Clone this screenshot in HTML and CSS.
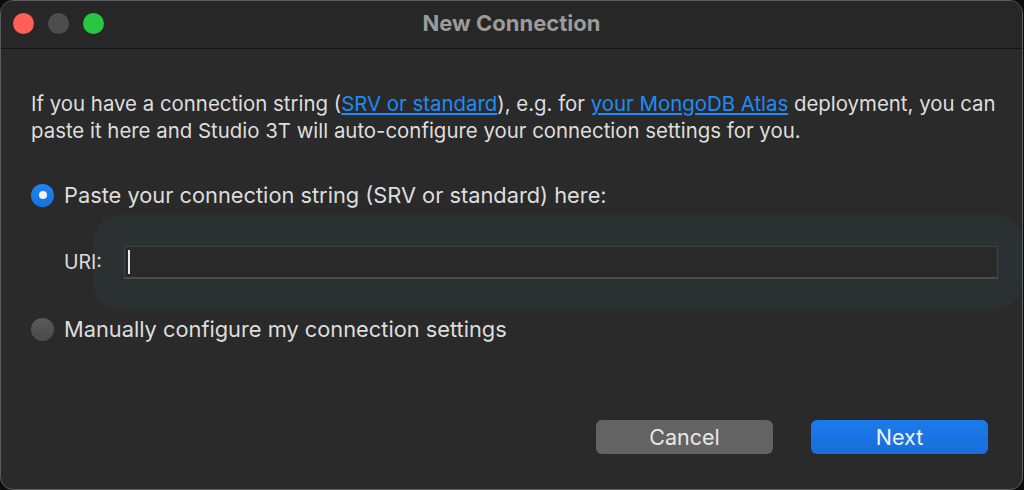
FILE: index.html
```html
<!DOCTYPE html>
<html>
<head>
<meta charset="utf-8">
<link rel="stylesheet" href="styles.css">
</head>
<body>
<div class="window">
  <div class="titlebar">
    <div class="lights">
      <span class="light red"></span>
      <span class="light gray"></span>
      <span class="light green"></span>
    </div>
    <div class="title">New Connection</div>
  </div>
  <div class="content">
    <p class="intro">If you have a connection string (<a class="link">SRV or standard</a>), e.g. for <a class="link">your MongoDB Atlas</a> deployment, you can paste it here and Studio 3T will auto-configure your connection settings for you.</p>
    <div class="option first">
      <span class="radio checked"></span>
      <span class="label">Paste your connection string (SRV or standard) here:</span>
    </div>
    <div class="uri-row">
      <div class="glow"></div>
      <span class="uri-label">URI:</span>
      <div class="input"><span class="caret"></span></div>
    </div>
    <div class="option second">
      <span class="radio"></span>
      <span class="label">Manually configure my connection settings</span>
    </div>
    <div class="buttons">
      <button class="btn cancel">Cancel</button>
      <button class="btn next">Next</button>
    </div>
  </div>
</div>
</body>
</html>
```
FILE: styles.css
```css
* { box-sizing: border-box; }
html, body {
  margin: 0;
  padding: 0;
  background: #0c0c0c;
  width: 1024px;
  height: 490px;
  overflow: hidden;
}
body {
  font-family: Inter, "Noto Sans", sans-serif;
}
.window {
  width: 1023px;
  height: 490px;
  border: 1px solid #5c5c5c;
  border-radius: 13px;
  background: #2a2a2a;
  overflow: hidden;
  display: flex;
  flex-direction: column;
}
.titlebar {
  height: 48px;
  flex: none;
  background: #272727;
  border-bottom: 1px solid #151515;
  position: relative;
  display: flex;
  align-items: center;
  justify-content: center;
}
.lights {
  position: absolute;
  left: 12px;
  top: 12px;
  display: flex;
  gap: 14px;
}
.light {
  width: 21px;
  height: 21px;
  border-radius: 50%;
  display: block;
}
.light.red { background: #fe5f57; }
.light.gray { background: #4d4d4d; }
.light.green { background: #29c73f; }
.title {
  color: #9b9b9b;
  font-weight: 700;
  font-size: 22px;
  margin-top: -3px;
}
.content {
  flex: 1;
  padding: 41px 0 0 30px;
  display: flex;
  flex-direction: column;
}
.intro {
  margin: 0;
  color: #dedede;
  font-size: 20.4px;
  line-height: 27px;
  width: 975px;
}
.link {
  color: #1d8cf7;
  text-decoration: underline;
  text-underline-offset: 2px;
}
.option {
  display: flex;
  align-items: center;
  height: 28px;
}
.option.first { margin-top: 37px; }
.option.second { margin-top: 6px; }
.radio {
  width: 23px;
  height: 23px;
  border-radius: 50%;
  background: linear-gradient(#5a5a5a, #4a4a4a);
  margin-right: 10px;
  position: relative;
  flex: none;
}
.radio.checked {
  background: linear-gradient(#2086f0, #1570dc);
}
.radio.checked::after {
  content: "";
  position: absolute;
  left: 7.5px;
  top: 7.5px;
  width: 8px;
  height: 8px;
  border-radius: 50%;
  background: #f2f2f2;
}
.label {
  color: #dedede;
  font-size: 21.8px;
}
.uri-row {
  position: relative;
  display: flex;
  align-items: center;
  margin-top: 6px;
  height: 94px;
  padding-left: 33px;
}
.glow {
  position: absolute;
  left: 62px;
  top: 0;
  width: 929px;
  height: 94px;
  border-radius: 26px;
  background: #2b3033;
}
.uri-label {
  position: relative;
  color: #dedede;
  font-size: 19.5px;
  width: 60px;
}
.input {
  position: relative;
  width: 874px;
  height: 33px;
  background: #292929;
  border: 1px solid #424242;
  border-bottom: 2px solid #4a4a4a;
  display: flex;
  align-items: center;
  padding-left: 3px;
}
.caret {
  width: 2px;
  height: 24px;
  background: #e8e8e8;
}
.buttons {
  display: flex;
  justify-content: flex-end;
  gap: 38px;
  margin-top: 77px;
  padding-right: 34px;
}
.btn {
  width: 177px;
  height: 34px;
  border: none;
  border-radius: 6px;
  font-family: Inter, "Noto Sans", sans-serif;
  font-size: 21.5px;
  color: #e8e8e8;
  padding: 0;
}
.btn.cancel { background: #636363; }
.btn.next { background: linear-gradient(#1c7aea, #166fdc); color: #f2f2f2; }
```
